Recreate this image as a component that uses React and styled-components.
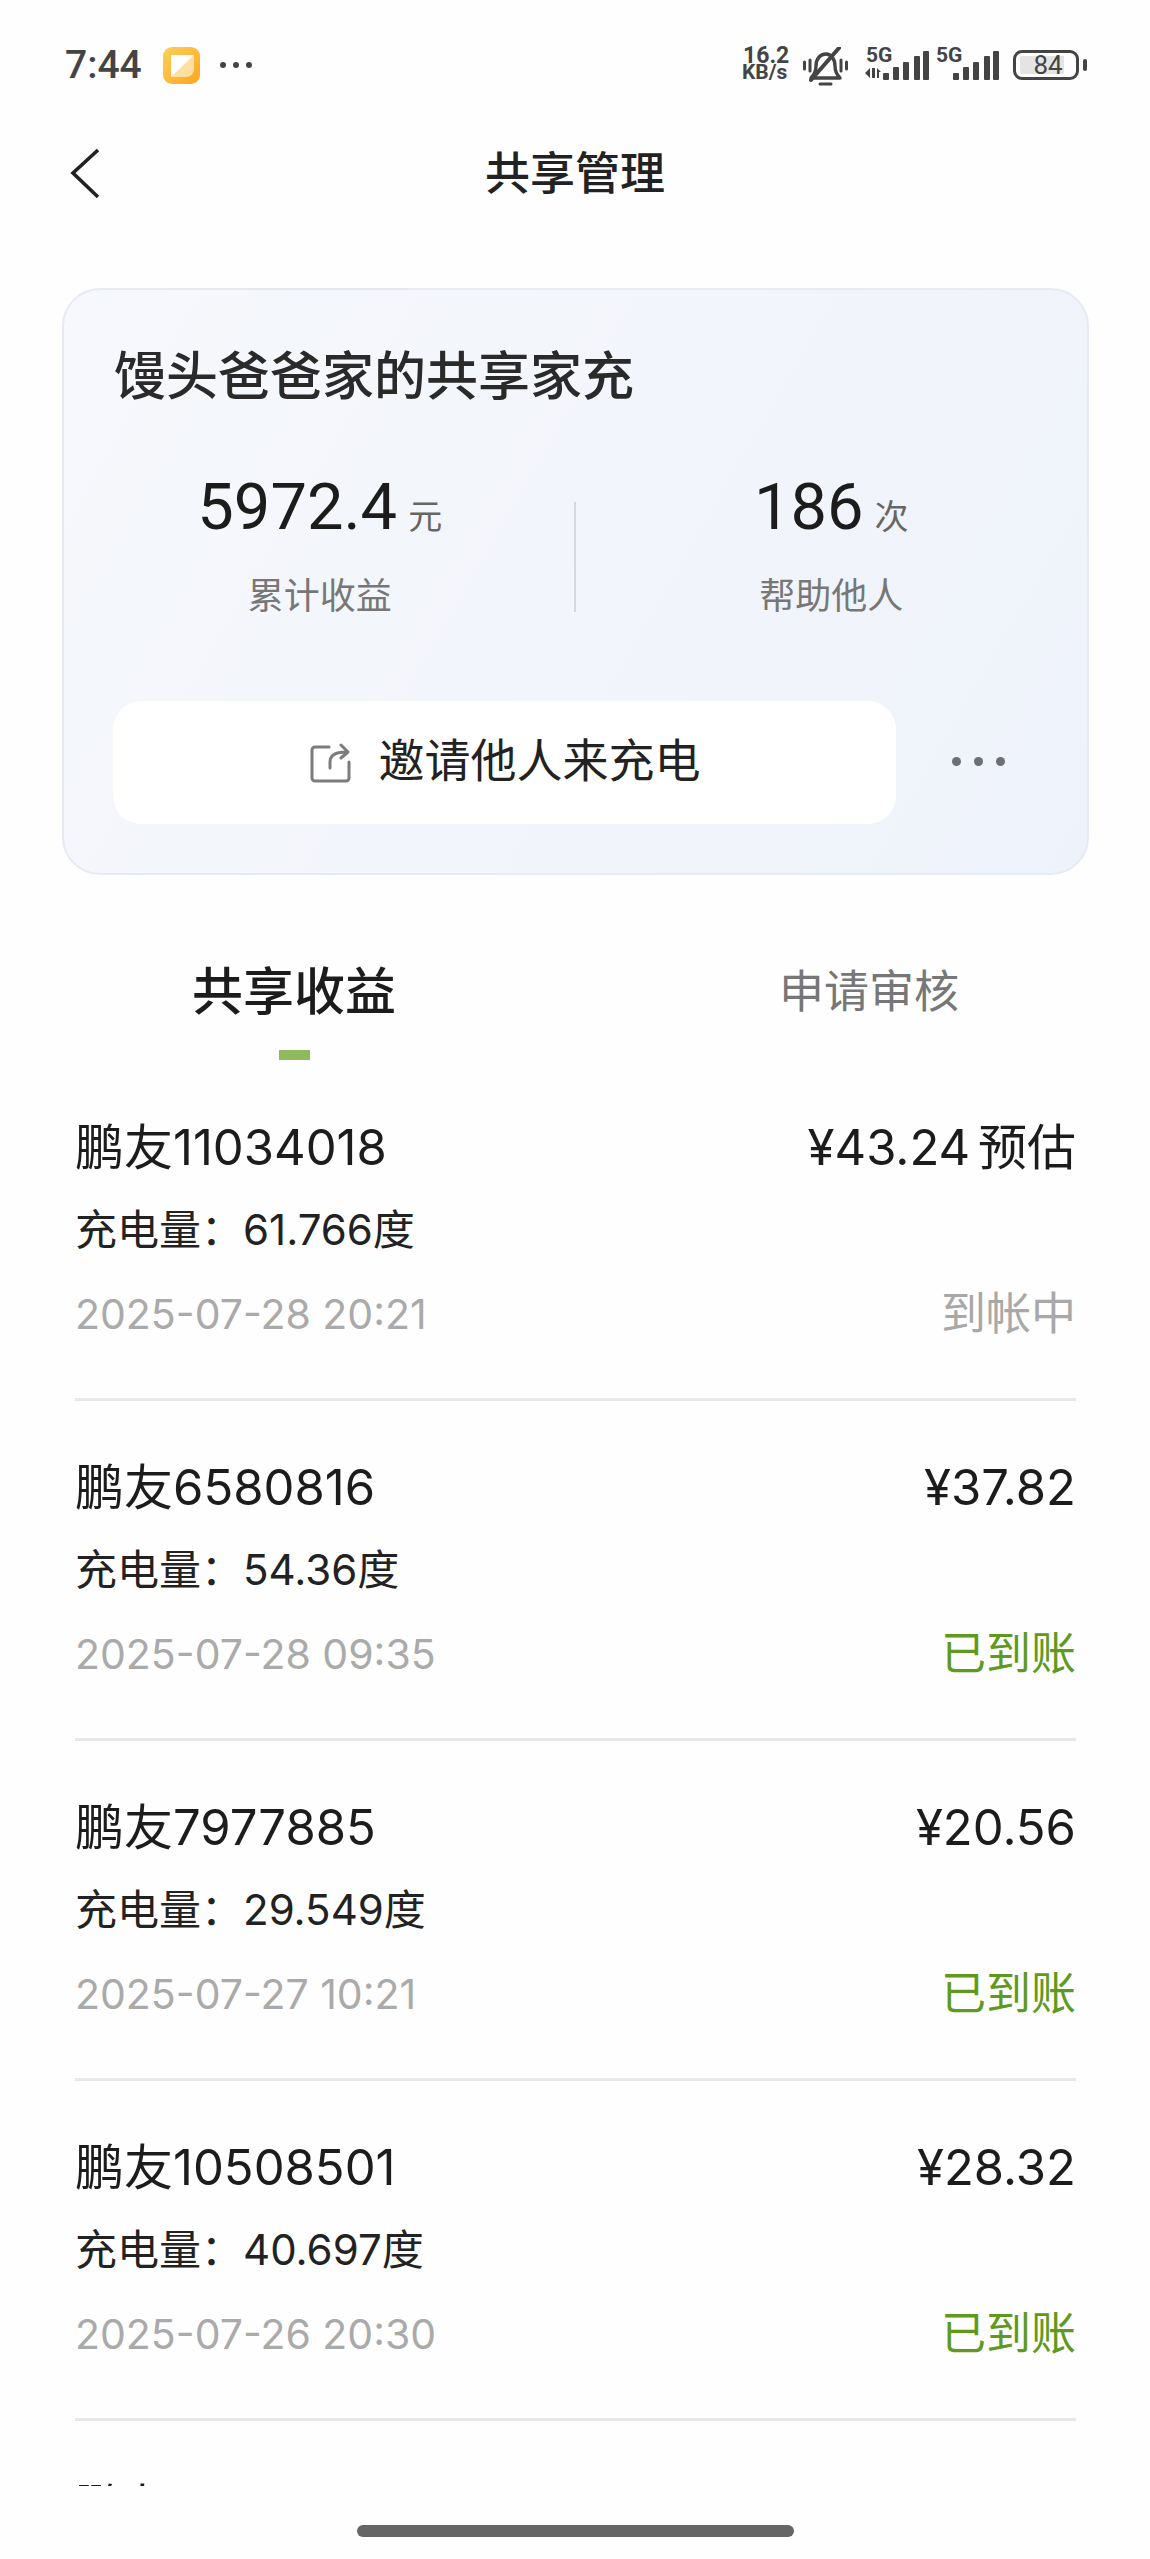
import React from 'react';
import styled, { createGlobalStyle } from 'styled-components';

const GlobalStyle = createGlobalStyle`
  html, body { margin: 0; padding: 0; background: #fefefe; }
  body { font-family: Roboto, "Noto Sans CJK SC", sans-serif; color: #1c1c1c; }
`;

const Page = styled.div`
  width: 1150px;
  height: 2559px;
  overflow: hidden;
  background: #fefefe;
`;

const StatusBar = styled.div`
  height: 128px;
  box-sizing: border-box;
  padding: 46px 71px 0 65px;
  display: flex;
  justify-content: space-between;
  align-items: flex-start;
`;

const StatusLeft = styled.div`
  display: flex;
  align-items: center;
  height: 38px;
`;

const Time = styled.span`
  font-size: 39px;
  font-weight: 500;
  color: #444;
  line-height: 38px;
  width: 98px;
`;

const StatusRight = styled.div`
  display: flex;
  align-items: flex-start;
  margin-top: 1px;
`;

const Speed = styled.div`
  width: 61px;
  font-weight: 700;
  color: #444;
  text-align: left;
  span { display: block; font-size: 21px; line-height: 17px; }
  span:first-child { font-size: 23px; padding-left: 1px; }
`;

const SignalGroup = styled.div`
  position: relative;
  width: ${({ $w }) => $w}px;
  height: 36px;
  svg { display: block; }
`;

const FiveG = styled.span`
  position: absolute;
  left: ${({ $x }) => $x}px;
  top: 0;
  font-size: 21px;
  line-height: 17px;
  font-weight: 700;
  color: #444;
`;

const Battery = styled.div`
  width: 66px;
  height: 30px;
  box-sizing: border-box;
  border: 3px solid #444;
  border-radius: 9px;
  margin-top: 3px;
  padding: 3px 0 3px 4px;
  position: relative;
  &::after {
    content: '';
    position: absolute;
    right: -11px;
    top: 6px;
    width: 4px;
    height: 12px;
    border-radius: 2px;
    background: #444;
  }
`;

const BatteryFill = styled.div`
  height: 100%;
  width: 44px;
  background: #e4e4e4;
  font-size: 26px;
  line-height: 19px;
  color: #444;
  text-align: center;
  padding-left: 12px;
  box-sizing: border-box;
  white-space: nowrap;
`;

const NavBar = styled.div`
  position: relative;
  height: 92px;
  display: flex;
  align-items: center;
  justify-content: center;
`;

const BackIcon = styled.svg`
  position: absolute;
  left: 68px;
  top: 20px;
`;

const NavTitle = styled.h1`
  margin: 0;
  font-size: 45px;
  font-weight: 500;
  line-height: 60px;
  margin-top: 2px;
  color: #222;
`;

const Card = styled.section`
  margin: 68px 61px 0 62px;
  height: 587px;
  box-sizing: border-box;
  border: 2px solid #e6eaf2;
  border-radius: 38px;
  background: linear-gradient(120deg, #f6f8fc 0%, #f2f5fb 55%, #eef2fa 100%);
  padding-top: 58px;
`;

const CardTitle = styled.h2`
  margin: 0 0 0 50px;
  font-size: 52px;
  line-height: 60px;
  font-weight: 500;
  color: #2a2a2a;
`;

const Stats = styled.div`
  position: relative;
  display: grid;
  grid-template-columns: 1fr 1fr;
  margin-top: 59px;
  &::after {
    content: '';
    position: absolute;
    left: 50%;
    margin-left: -2px;
    top: 35px;
    width: 2px;
    height: 110px;
    background: #d6dae0;
  }
`;

const Stat = styled.div`
  text-align: center;
`;

const StatValue = styled.div`
  height: 80px;
  line-height: 80px;
  font-size: 65px;
  color: #1c1c1c;
  white-space: nowrap;
  small { font-size: 34px; color: #666; margin-left: 11px; }
`;

const StatLabel = styled.div`
  margin-top: 25px;
  font-size: 36px;
  line-height: 50px;
  color: #777;
`;

const Actions = styled.div`
  display: flex;
  align-items: center;
  margin: 79px 0 0 49px;
`;

const InviteButton = styled.div`
  width: 783px;
  height: 123px;
  border-radius: 28px;
  background: #fff;
  display: flex;
  align-items: center;
  justify-content: center;
  gap: 28px;
  font-size: 46px;
  line-height: 60px;
  color: #222;
  span { margin-top: -3px; }
`;

const MoreDots = styled.div`
  display: flex;
  gap: 13px;
  margin: -2px 0 0 56px;
  i { width: 9px; height: 9px; border-radius: 50%; background: #6c7076; }
`;

const TabBar = styled.div`
  display: flex;
  gap: 175px;
  padding-left: 94px;
  margin-top: 82px;
`;

const Tab = styled.div`
  width: 400px;
  text-align: center;
  height: 103px;
  font-size: ${({ $active }) => ($active ? 51 : 45)}px;
  font-weight: ${({ $active }) => ($active ? 500 : 400)};
  line-height: 72px;
  color: ${({ $active }) => ($active ? '#1c1c1c' : '#777')};
  &::after {
    content: '';
    display: ${({ $active }) => ($active ? 'block' : 'none')};
    width: 31px;
    height: 10px;
    margin: 21px auto 0;
    background: #8fbb5e;
  }
`;

const List = styled.div`
  margin: 58px 74px 0 75px;
  height: 1368px;
  overflow: hidden;
  font-family: Inter, "Noto Sans CJK SC", sans-serif;
`;

const Row = styled.div`
  padding-bottom: 54px;
  margin-bottom: 57px;
  border-bottom: 3px solid #e8e8e8;
`;

const Line = styled.div`
  display: flex;
  justify-content: space-between;
  align-items: center;
  height: 60px;
  line-height: 60px;
`;

const Name = styled.span`
  font-size: 49px;
  color: #1c1c1c;
`;

const Amount = styled.span`
  font-size: 49px;
  color: #1c1c1c;
  word-spacing: -6px;
`;

const Energy = styled(Line)`
  margin-top: 22px;
  font-size: 42px;
  color: #222;
`;

const DateLine = styled(Line)`
  margin-top: 24px;
`;

const DateText = styled.span`
  font-size: 41px;
  color: #aaa;
`;

const Status = styled.span`
  font-size: 45px;
  color: ${({ $paid }) => ($paid ? '#5f9a1f' : '#a8a8a8')};
`;

const HomeBar = styled.div`
  width: 437px;
  height: 12px;
  margin: 39px 0 0 357px;
  border-radius: 6px;
  background: #666;
`;

const AppIcon = () => (
  <svg width="37" height="37" viewBox="0 0 37 37">
    <defs>
      <linearGradient id="noteBg" x1="0" y1="0" x2="1" y2="1">
        <stop offset="0" stopColor="#fdd05a" />
        <stop offset="1" stopColor="#fda51f" />
      </linearGradient>
    </defs>
    <rect width="37" height="37" rx="9" fill="url(#noteBg)" />
    <path d="M8 8h23v12L20 30H8z" fill="#fff" />
    <path d="M31 8v14a8 8 0 0 1-8 8H8z" fill="#fde0a0" />
  </svg>
);

const Dots = styled.div`
  display: flex;
  gap: 7px;
  margin-left: 20px;
  i { width: 6px; height: 6px; border-radius: 50%; background: #444; }
`;

const BellOff = () => (
  <svg width="62" height="40" viewBox="0 0 62 40" fill="none" stroke="#444" strokeLinecap="round">
    <g strokeWidth="3">
      <path d="M1.5 15v7M7 13v11M38 13v11M43.500 15v7" />
    </g>
    <path d="M8 31h29c-3-3-5-6-5-12 0-7-4-12-9-12-6 0-10 5-10 12 0 6-2 9-5 12z" strokeWidth="3.400" strokeLinejoin="round" />
    <path d="M36 1L8 33" strokeWidth="4" />
    <path d="M17 37h11" strokeWidth="3" />
  </svg>
);

const bars = [
  [0, 7],
  [10, 13],
  [20, 18],
  [31, 24],
  [40, 29],
];

const Signal = ({ arrows }) => (
  <svg width="66" height="34" viewBox="0 0 66 34" fill="#444">
    {arrows && <path d="M0 26l5-5v10zM7 21h3v10H7zM12 21l4 4h-2v6h-2z" />}
    {bars.map(([x, h]) => (
      <rect key={x} x={x + (arrows ? 18 : 17)} y={33 - h} width="6" height={h} rx="1" />
    ))}
  </svg>
);

const ShareIcon = () => (
  <svg width="42" height="42" viewBox="0 0 42 42" fill="none" stroke="#7c7c7c" strokeWidth="3" strokeLinecap="round" strokeLinejoin="round">
    <path d="M20 5H6a3 3 0 0 0-3 3v28a3 3 0 0 0 3 3h31a3 3 0 0 0 3-3V20" />
    <path d="M21 26v-6c0-6 5-10 16-10M32 3l7 7-7 6" />
  </svg>
);

const records = [
  { name: '鹏友11034018', amount: '¥43.24 预估', energy: '61.766度', date: '2025-07-28 20:21', status: '到帐中', paid: false },
  { name: '鹏友6580816', amount: '¥37.82', energy: '54.36度', date: '2025-07-28 09:35', status: '已到账', paid: true },
  { name: '鹏友7977885', amount: '¥20.56', energy: '29.549度', date: '2025-07-27 10:21', status: '已到账', paid: true },
  { name: '鹏友10508501', amount: '¥28.32', energy: '40.697度', date: '2025-07-26 20:30', status: '已到账', paid: true },
];

export default function App() {
  return (
    <Page>
      <GlobalStyle />
      <StatusBar>
        <StatusLeft>
          <Time>7:44</Time>
          <AppIcon />
          <Dots><i /><i /><i /></Dots>
        </StatusLeft>
        <StatusRight>
          <Speed><span>16.2</span><span>KB/s</span></Speed>
          <BellOff />
          <SignalGroup $w={71}>
            <FiveG $x={1}>5G</FiveG>
            <Signal arrows />
          </SignalGroup>
          <SignalGroup $w={77}>
            <FiveG $x={0}>5G</FiveG>
            <Signal />
          </SignalGroup>
          <Battery><BatteryFill>84</BatteryFill></Battery>
        </StatusRight>
      </StatusBar>

      <NavBar>
        <BackIcon width="34" height="52" viewBox="0 0 34 52" fill="none" stroke="#222" strokeWidth="3.6">
          <path d="M30 2L5 25l25 24" />
        </BackIcon>
        <NavTitle>共享管理</NavTitle>
      </NavBar>

      <Card>
        <CardTitle>馒头爸爸家的共享家充</CardTitle>
        <Stats>
          <Stat>
            <StatValue>5972.4<small>元</small></StatValue>
            <StatLabel>累计收益</StatLabel>
          </Stat>
          <Stat>
            <StatValue>186<small>次</small></StatValue>
            <StatLabel>帮助他人</StatLabel>
          </Stat>
        </Stats>
        <Actions>
          <InviteButton>
            <ShareIcon />
            <span>邀请他人来充电</span>
          </InviteButton>
          <MoreDots><i /><i /><i /></MoreDots>
        </Actions>
      </Card>

      <TabBar>
        <Tab $active>共享收益</Tab>
        <Tab>申请审核</Tab>
      </TabBar>

      <List>
        {records.map(r => (
          <Row key={r.name}>
            <Line>
              <Name>{r.name}</Name>
              <Amount>{r.amount}</Amount>
            </Line>
            <Energy>充电量：{r.energy}</Energy>
            <DateLine>
              <DateText>{r.date}</DateText>
              <Status $paid={r.paid}>{r.status}</Status>
            </DateLine>
          </Row>
        ))}
        <Line><Name>鹏友</Name></Line>
      </List>
      <HomeBar />
    </Page>
  );
}
